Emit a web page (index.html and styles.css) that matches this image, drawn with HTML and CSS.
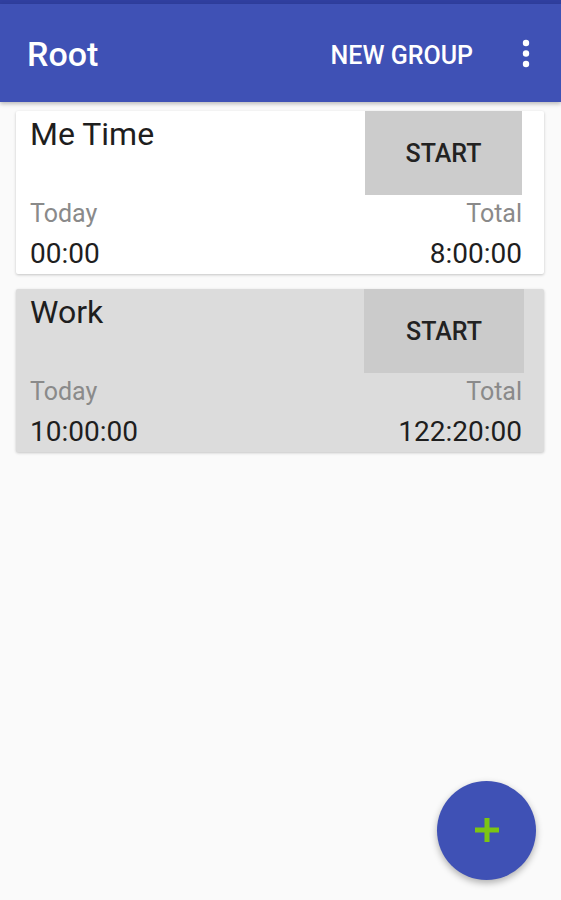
FILE: index.html
```html
<!DOCTYPE html>
<html lang="en">
<head>
<meta charset="utf-8">
<title>Root</title>
<link rel="stylesheet" href="styles.css">
</head>
<body>
<div class="app">
  <div class="status"></div>
  <header class="toolbar">
    <h1 class="title">Root</h1>
    <span class="action">NEW GROUP</span>
    <svg class="kebab" width="12" height="32" viewBox="0 0 12 32" aria-hidden="true">
      <circle cx="6" cy="5" r="3.2" fill="#fff"/>
      <circle cx="6" cy="15.5" r="3.2" fill="#fff"/>
      <circle cx="6" cy="26" r="3.2" fill="#fff"/>
    </svg>
  </header>
  <main class="list">
    <section class="card">
      <div class="card-top">
        <div class="name">Me Time</div>
        <div class="start">START</div>
      </div>
      <div class="stats">
        <div class="col">
          <div class="label">Today</div>
          <div class="value">00:00</div>
        </div>
        <div class="col right">
          <div class="label">Total</div>
          <div class="value">8:00:00</div>
        </div>
      </div>
    </section>
    <section class="card selected">
      <div class="card-top">
        <div class="name">Work</div>
        <div class="start">START</div>
      </div>
      <div class="stats">
        <div class="col">
          <div class="label">Today</div>
          <div class="value">10:00:00</div>
        </div>
        <div class="col right">
          <div class="label">Total</div>
          <div class="value">122:20:00</div>
        </div>
      </div>
    </section>
  </main>
  <button class="fab" aria-label="Add">
    <svg width="26" height="26" viewBox="0 0 26 26" aria-hidden="true">
      <rect x="10.5" y="1" width="5" height="24" fill="#7cc512"/>
      <rect x="1" y="10.5" width="24" height="5" fill="#7cc512"/>
    </svg>
  </button>
</div>
</body>
</html>
```
FILE: styles.css
```css
* { box-sizing: border-box; }
html, body {
  margin: 0;
  padding: 0;
  background: #fafafa;
}
body {
  font-family: Roboto, "Liberation Sans", sans-serif;
}
.app {
  position: relative;
  min-height: 900px;
  overflow: hidden;
}
.status {
  height: 4px;
  background: #303f9f;
}
.toolbar {
  height: 98px;
  background: #3f51b5;
  display: flex;
  align-items: center;
  padding: 0 29px 0 27px;
  box-shadow: 0 2px 4px rgba(0,0,0,0.25);
  position: relative;
  z-index: 1;
}
.title {
  flex: 1;
  margin: 0;
  font-size: 34px;
  font-weight: 500;
  color: #fff;
  padding-top: 2px;
}
.action {
  font-size: 25px;
  font-weight: 500;
  color: #fff;
  padding-top: 4px;
  margin-right: 47px;
}
.kebab {
  display: block;
  margin-top: 2px;
}
.list {
  padding: 9px 17px 0 16px;
  display: flex;
  flex-direction: column;
  gap: 15px;
}
.card {
  height: 163px;
  background: #fff;
  border-radius: 2px;
  box-shadow: 0 1px 3px rgba(0,0,0,0.22);
  padding: 0 22px 3px 14px;
}
.card.selected {
  background: #dcdcdc;
}
.card-top {
  display: flex;
  justify-content: space-between;
  height: 84px;
}
.name {
  font-size: 32px;
  line-height: 38px;
  padding-top: 4px;
  color: #1e1e1e;
}
.start {
  width: 157px;
  height: 84px;
  background: #cccccc;
  display: flex;
  align-items: center;
  justify-content: center;
  font-size: 25px;
  font-weight: 500;
  color: #222;
}
.selected .start {
  background: #cbcbcb;
  width: 160px;
  margin-right: -2px;
}
.stats {
  display: flex;
  justify-content: space-between;
  margin-top: 5px;
}
.col.right {
  text-align: right;
}
.label {
  font-size: 25px;
  line-height: 28px;
  color: #8a8a8a;
}
.value {
  margin-top: 10px;
  font-size: 28px;
  line-height: 32px;
  color: #1e1e1e;
}
.fab {
  position: absolute;
  right: 25px;
  bottom: 20px;
  width: 99px;
  height: 99px;
  border: none;
  border-radius: 50%;
  background: #3f51b5;
  box-shadow: 0 3px 7px rgba(0,0,0,0.3);
  display: flex;
  align-items: center;
  justify-content: center;
  padding: 0;
}
.fab svg {
  display: block;
  margin-top: -2px;
}
```
